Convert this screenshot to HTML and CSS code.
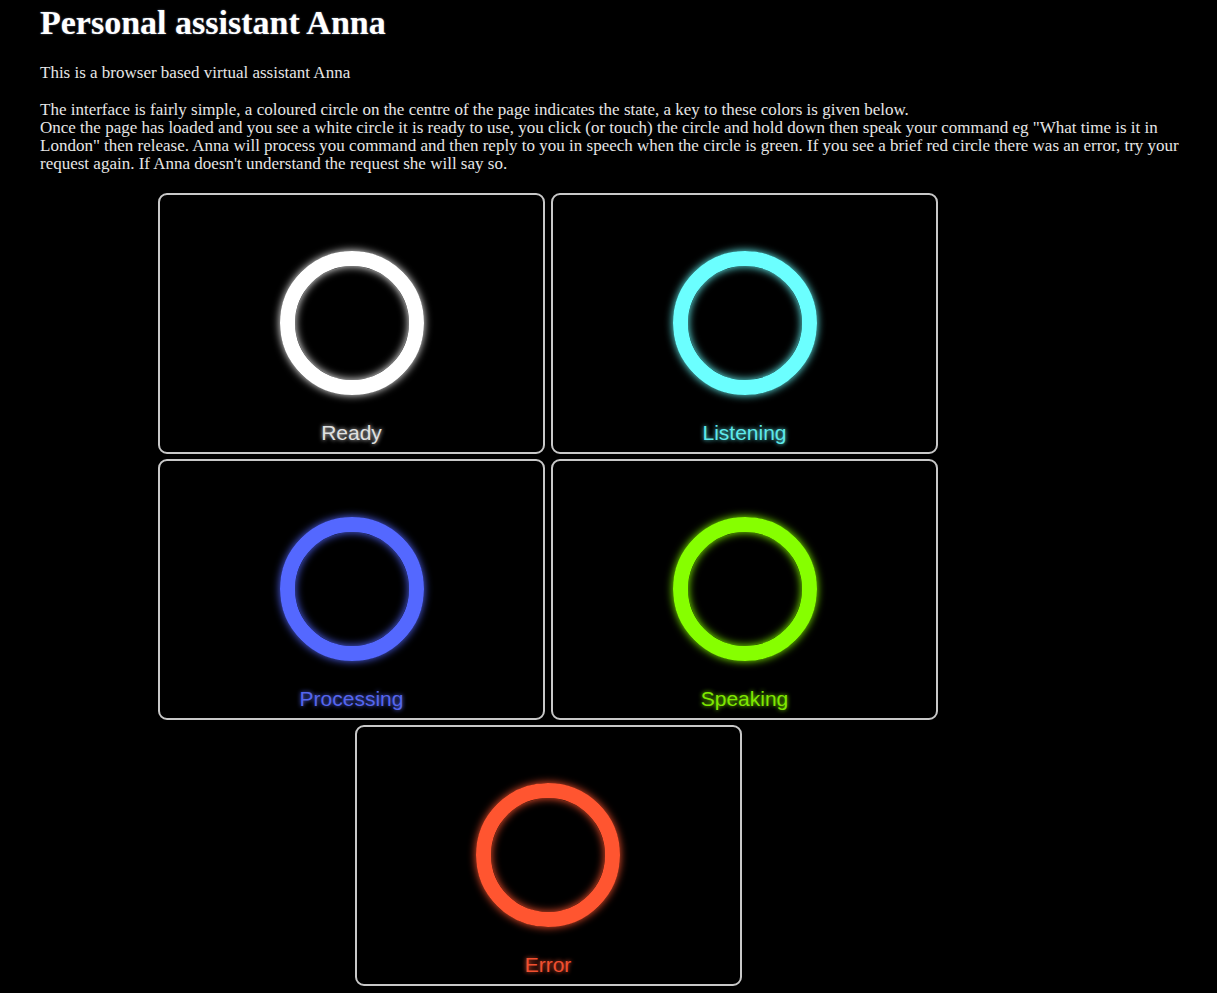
FILE: index.html
```html
<!DOCTYPE html>
<html lang="en">
<head>
<meta charset="utf-8">
<title>Personal assistant Anna</title>
<link rel="stylesheet" href="styles.css">
</head>
<body>
<h1 class="title">Personal assistant Anna</h1>
<p class="intro">This is a browser based virtual assistant Anna</p>
<p class="intro">The interface is fairly simple, a coloured circle on the centre of the page indicates the state, a key to these colors is given below.<br>Once the page has loaded and you see a white circle it is ready to use, you click (or touch) the circle and hold down then speak your command eg "What time is it in London" then release. Anna will process you command and then reply to you in speech when the circle is green. If you see a brief red circle there was an error, try your request again. If Anna doesn't understand the request she will say so.</p>
<div class="key">
  <div class="card ready"><div class="ring"></div><div class="label">Ready</div></div>
  <div class="card listening"><div class="ring"></div><div class="label">Listening</div></div>
  <div class="card processing"><div class="ring"></div><div class="label">Processing</div></div>
  <div class="card speaking"><div class="ring"></div><div class="label">Speaking</div></div>
  <div class="card error"><div class="ring"></div><div class="label">Error</div></div>
</div>
</body>
</html>
```
FILE: styles.css
```css
html, body {
  background: #000;
}
body {
  margin: 0;
  padding: 0 0 0 40px;
  color: #e6e6e6;
  font-family: "Liberation Serif", "Times New Roman", serif;
  font-size: 17px;
}
.title {
  margin: 3px 0 0;
  font-size: 34px;
  line-height: 39px;
  font-weight: bold;
  color: #fff;
  text-shadow: 0 0 2px rgba(200, 220, 255, 0.5);
}
.intro {
  margin: 22px 0 0;
  line-height: 18px;
}
.intro + .intro {
  margin-top: 19px;
}
.key {
  width: 1016px;
  margin-top: 20px;
  display: flex;
  flex-wrap: wrap;
  justify-content: center;
  gap: 5px 6px;
}
.card {
  box-sizing: border-box;
  width: 387px;
  height: 261px;
  border: 2.5px solid #c8c8c8;
  border-radius: 9px;
  display: flex;
  flex-direction: column;
  align-items: center;
  padding-top: 55.5px;
  font-family: "Liberation Sans", Arial, sans-serif;
}
.ring {
  box-sizing: border-box;
  width: 144px;
  height: 144px;
  border-radius: 50%;
  border: 15px solid currentColor;
  box-shadow: 0 0 8px currentColor, inset 0 0 8px currentColor;
}
.label {
  margin-top: 26px;
  font-size: 21px;
  line-height: 24px;
  text-shadow: 0 0 4px currentColor;
}
.ready .ring { color: #ffffff; }
.ready .label { color: #e0e0e0; }
.listening .ring { color: #6bffff; }
.listening .label { color: #5ee8ea; }
.processing .ring { color: #5468ff; }
.processing .label { color: #5566ee; }
.speaking .ring { color: #86ff00; }
.speaking .label { color: #7ee800; }
.error .ring { color: #ff5530; }
.error .label { color: #f05030; }
```
